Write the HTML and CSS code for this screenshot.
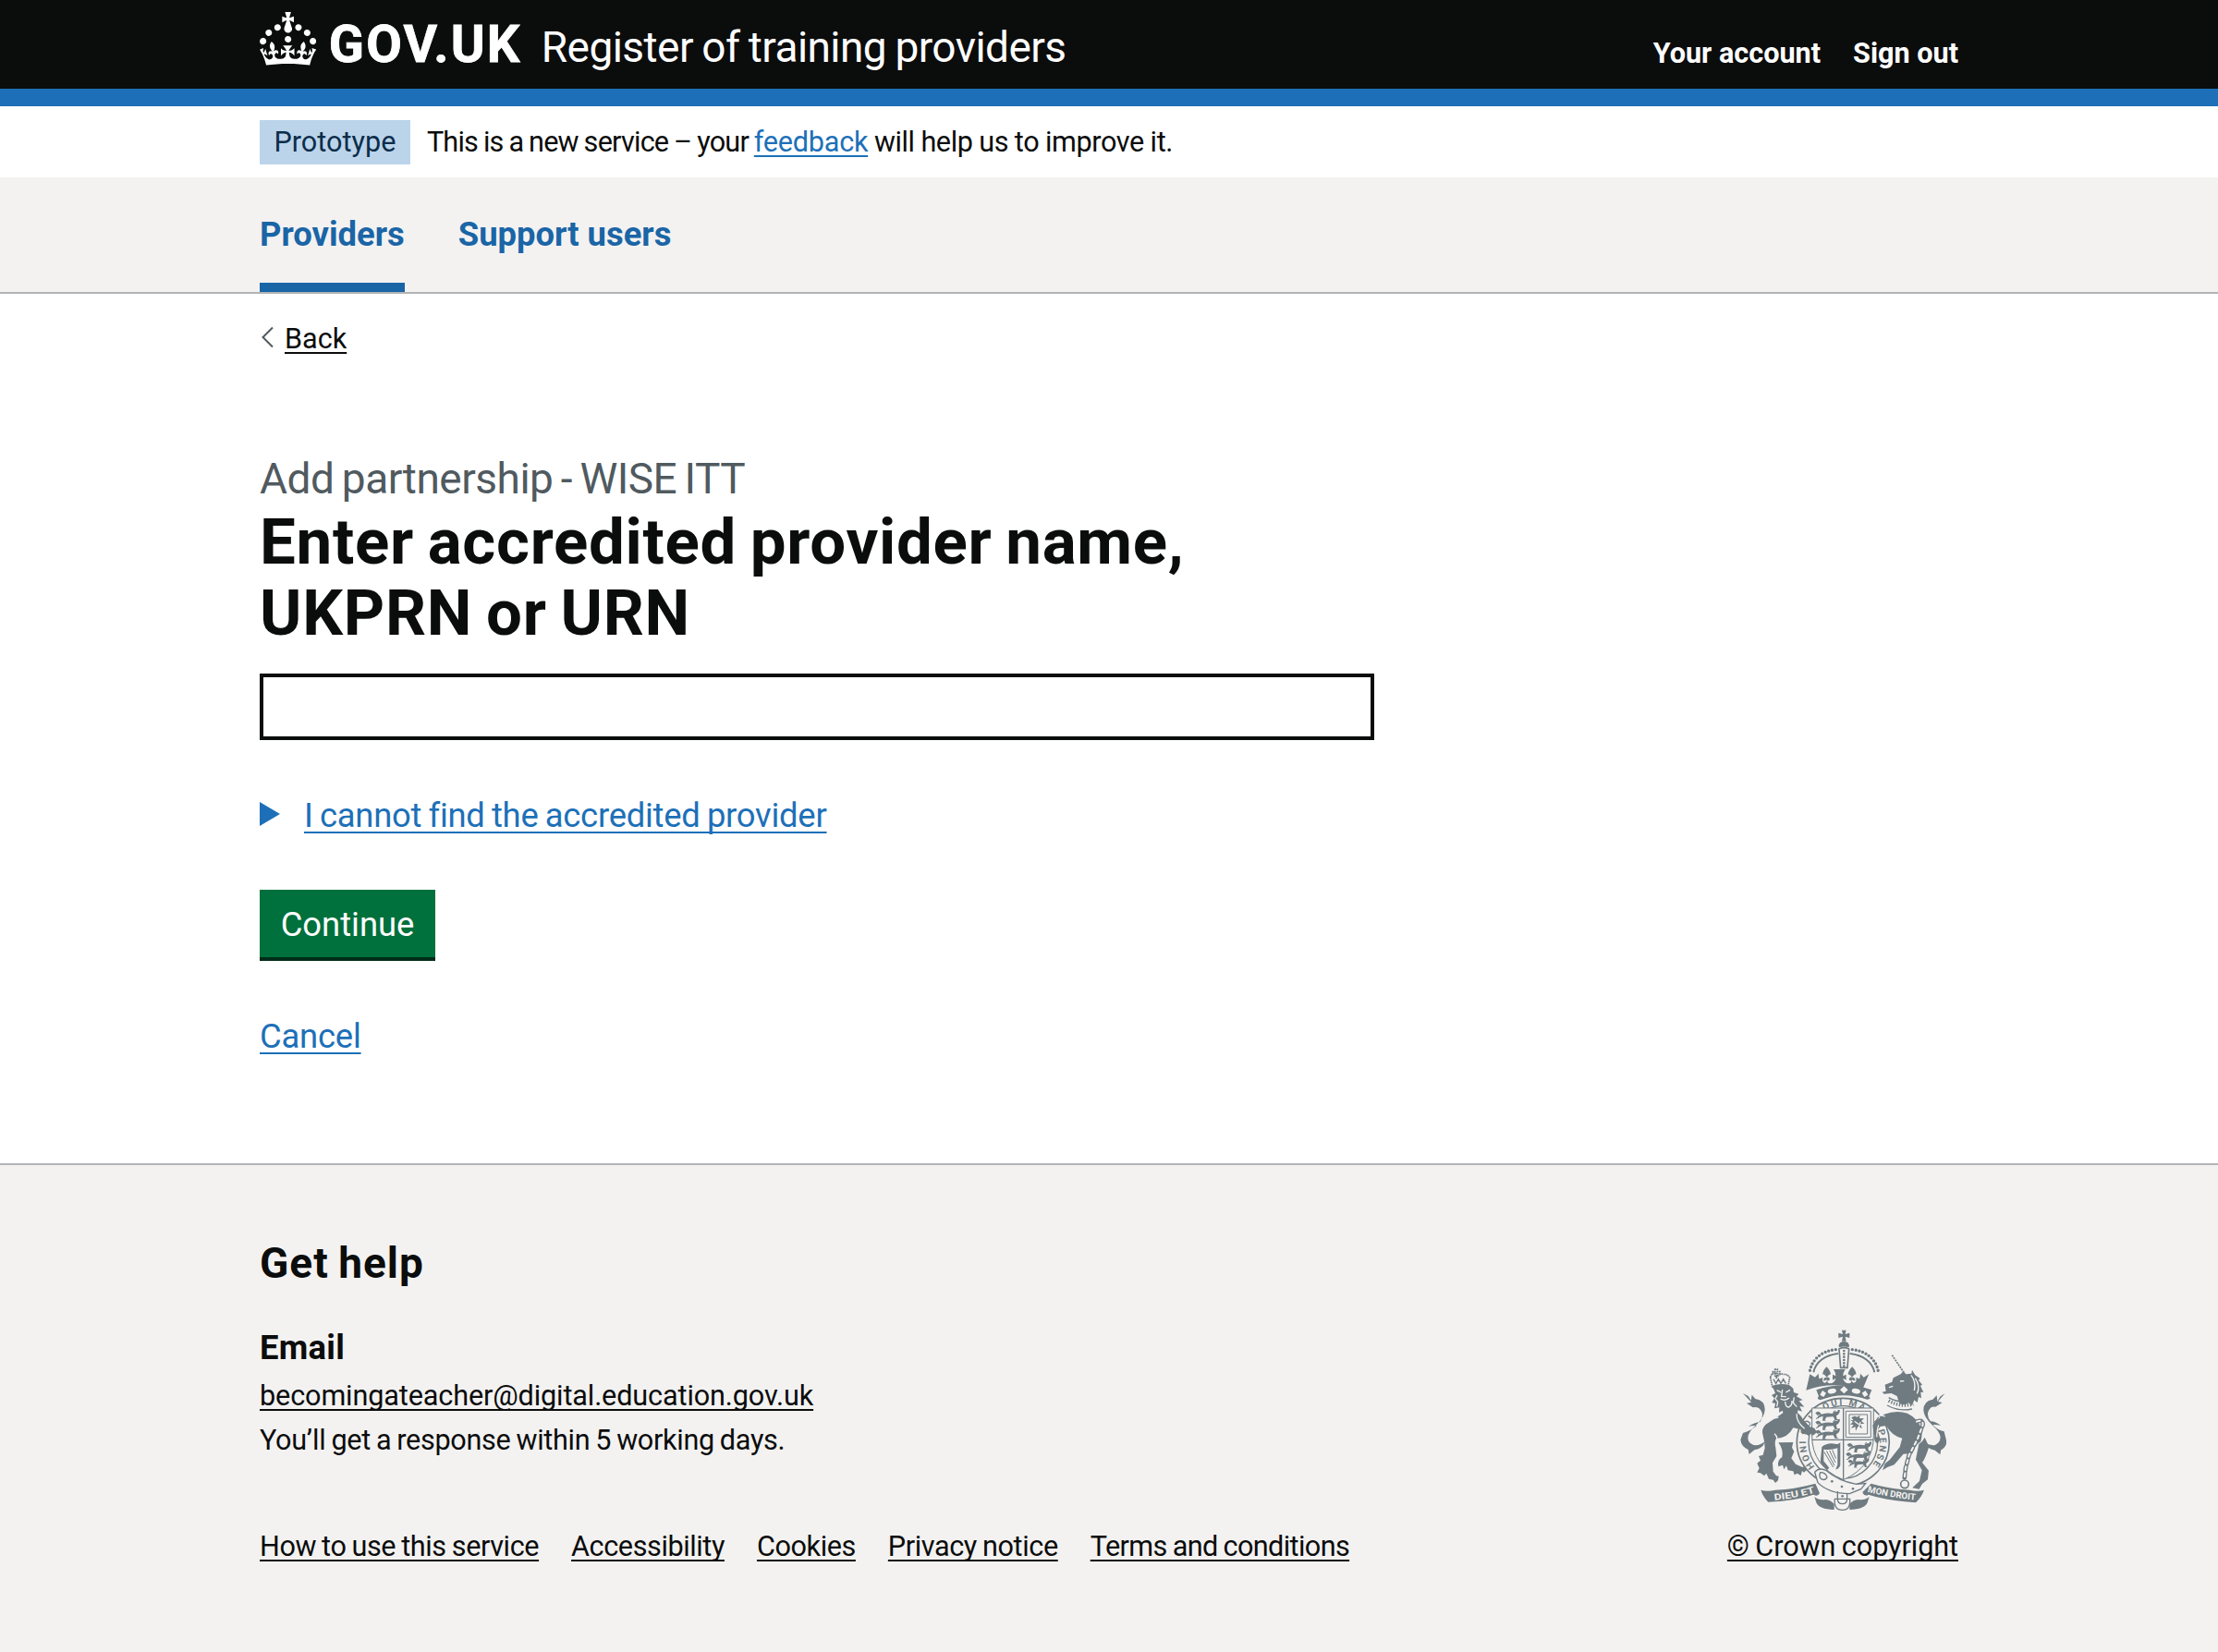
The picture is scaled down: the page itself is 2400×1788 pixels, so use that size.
FILE: index.html
```
<!DOCTYPE html>
<html lang="en">
<head>
<meta charset="utf-8">
<title>Enter accredited provider name, UKPRN or URN</title>
<link rel="stylesheet" href="styles.css">
</head>
<body>
<header class="header">
  <div class="container header-row">
    <a class="logo" href="#">
      <svg class="crown" viewBox="0 0 32 30" aria-hidden="true"><path fill="#fff" d="M22.6 10.4c-1 .4-2-.1-2.4-1-.4-.9.1-2 1-2.4.9-.4 2 .1 2.4 1s-.1 2-1 2.4m-5.9 6.7c-.9.4-2-.1-2.4-1-.4-.9.1-2 1-2.4.9-.4 2 .1 2.4 1s-.1 2-1 2.4m10.8-3.7c-1 .4-2-.1-2.4-1-.4-.9.1-2 1-2.4.9-.4 2 .1 2.4 1s0 2-1 2.4m3.3 4.8c-1 .4-2-.1-2.4-1-.4-.9.1-2 1-2.4.9-.4 2 .1 2.4 1s-.1 2-1 2.4M17 4.7l2.3 1.2V2.5l-2.3.7-.2-.2.9-3h-3.4l.9 3-.2.2c-.1.1-2.3-.7-2.3-.7v3.4L15 4.7c.1.1.1.2.2.2l-1.3 4c-.1.2-.1.4-.1.6 0 1.1.8 2 1.9 2.2h.7c1-.2 1.9-1.1 1.9-2.1 0-.2 0-.4-.1-.6l-1.3-4c-.1-.2 0-.2.1-.3m-7.6 5.7c.9.4 2-.1 2.4-1 .4-.9-.1-2-1-2.4-.9-.4-2 .1-2.4 1s0 2 1 2.4m-5 3c.9.4 2-.1 2.4-1 .4-.9-.1-2-1-2.4-.9-.4-2 .1-2.4 1s.1 2 1 2.4m-3.2 4.8c.9.4 2-.1 2.4-1 .4-.9-.1-2-1-2.4-.9-.4-2 .1-2.4 1s0 2 1 2.4m14.8 11c4.400 0 8.600.3 12.300.8 1.100-4.500 2.400-7 3.700-8.800l-2.500-.9c.2 1.300.3 1.900 0 2.700-.4-.4-.8-1.100-1.100-2.300l-1.200 4c.7-.5 1.300-.8 2-.9-1.100 2.500-2.600 3.100-3.500 3-1.100-.2-1.700-1.200-1.500-2.100.3-1.200 1.500-1.500 2.100-.1 1.100-2.300-.8-3-2-2.300 1.900-1.900 2.100-3.500.6-5.600-2.100 1.600-2.100 3.200-1.200 5.500-1.200-1.400-3.200-.6-2.500 1.600.9-1.400 2.100-.5 1.900.8-.2 1.100-1.700 2.100-3.500 1.900-2.700-.2-2.900-2.100-2.900-3.600.7-.1 1.900.5 2.900 1.900v-4.300c-1.100 1.100-2.100 1.400-3.200 1.400.4-1.200 2.100-3 2.100-3h-5.400s1.700 1.900 2.100 3c-1.100 0-2.100-.2-3.200-1.400v4.300c1-1.400 2.200-2 2.900-1.900-.1 1.500-.2 3.400-2.900 3.600-1.900.2-3.400-.8-3.500-1.900-.2-1.300 1-2.200 1.900-.8.7-2.300-1.200-3-2.500-1.600.9-2.200.9-3.900-1.200-5.500-1.500 2-1.300 3.700.6 5.600-1.200-.7-3.100 0-2 2.300.6-1.400 1.800-1.100 2.100.1.200.9-.3 1.900-1.500 2.100-.9.2-2.400-.5-3.500-3 .6 0 1.200.3 2 .9l-1.200-4c-.3 1.100-.7 1.900-1.100 2.300-.3-.8-.2-1.400 0-2.700L0 21.200C1.300 23 2.600 25.500 3.700 30c3.700-.5 7.900-.8 12.300-.8"/></svg>
      <span class="logotype">GOV.UK</span>
      <span class="product">Register of training providers</span>
    </a>
    <nav class="account">
      <a href="#">Your account</a>
      <a href="#">Sign out</a>
    </nav>
  </div>
</header>
<div class="container phase">
  <strong class="tag">Prototype</strong>
  <p class="phase-text">This is a new service – your <a class="link" href="#">feedback</a><span class="phase-end"> will help us to improve it.</span></p>
</div>
<nav class="service-nav">
  <div class="container nav-row">
    <a class="nav-item nav-active" href="#">Providers</a>
    <a class="nav-item" href="#">Support users</a>
  </div>
</nav>
<div class="container main">
  <a class="back" href="#">
    <svg class="chevron" viewBox="0 0 14 24" aria-hidden="true"><path d="M13 1.5 2.500 12 13 22.500" fill="none" stroke="#505a5f" stroke-width="2"/></svg>
    <span class="back-text">Back</span>
  </a>
  <main>
    <span class="caption">Add partnership - WISE ITT</span>
    <h1 class="title"><label for="provider">Enter accredited provider name,<br>UKPRN or URN</label></h1>
    <input class="input" id="provider" type="text">
    <div class="details">
      <svg class="triangle" viewBox="0 0 22 26" aria-hidden="true"><path d="M0 0 22 13 0 26z" fill="#1d70b8"/></svg>
      <span class="link details-text">I cannot find the accredited provider</span>
    </div>
    <button class="button" type="button">Continue</button>
    <p class="cancel"><a class="link" href="#">Cancel</a></p>
  </main>
</div>
<footer class="footer">
  <div class="container footer-row">
    <div class="footer-main">
      <h2 class="footer-title">Get help</h2>
      <h3 class="footer-subtitle">Email</h3>
      <p class="footer-text"><a class="email" href="#">becomingateacher@digital.education.gov.uk</a></p>
      <p class="footer-text footer-note">You’ll get a response within 5 working days.</p>
      <div class="footer-links">
        <a class="fl fl-first" href="#">How to use this service</a>
        <a class="fl fl-tight" href="#">Accessibility</a>
        <a class="fl fl-tight" href="#">Cookies</a>
        <a class="fl fl-mid" href="#">Privacy notice</a>
        <a class="fl fl-last" href="#">Terms and conditions</a>
      </div>
    </div>
    <div class="copyright">
      <svg class="crest" viewBox="70 55 670 592" aria-hidden="true">
        <defs>
          <path id="motto" d="M312 500A120 121 0 1 1 492 503"/>
          <path id="dieu" d="M181 609Q255 603 318 582"/>
          <path id="droit" d="M483 582Q560 602 642 609"/>
          <g id="passant">
            <path d="M314 326q8-9 15-2l5 6q20-6 36-2 8-10 16-6-2-8 8-5-1 13-12 18l2 11 8 3h-14l-6-11-22 1-5 9 4 3h-12l2-15-12 4-6 5 1-9 9-5-11 2z"/>
            <path d="M374 330q-5-9 4-12M316 345l9-6" fill="none" stroke="#6f7b80" stroke-width="3"/>
          </g>
        </defs>
        <g fill="#6f7b80">
          <!-- crown -->
          <path d="M400 57h14l-3 13 14-4v16l-14-4 3 15h-14l3-15-14 4V66l14 4z"/>
          <path d="M394 98q13-8 26 0 6 8 3 15-16-5-32 0-3-8 3-15z"/>
          <path d="M380 120C335 124 303 152 296 190M434 120C479 124 511 152 518 190" fill="none" stroke="#6f7b80" stroke-width="10" stroke-linecap="round" stroke-dasharray="0 11.500"/>
          <path d="M388 133C345 138 315 160 308 194M426 133C469 138 499 160 506 194" fill="none" stroke="#6f7b80" stroke-width="6"/>
          <path d="M391 118q16-8 32 0l-5 61h-22z" fill="none" stroke="#6f7b80" stroke-width="5"/>
          <path d="M407 124v56" fill="none" stroke="#6f7b80" stroke-width="8" stroke-linecap="round" stroke-dasharray="0 10"/>
          <path d="M296 200l17 10 11-12 2 17 12-4q-4 16 8 17 8-4 5-10-8 5-11 1 5-14 12-5-6-14-15-14 3-15 13-24 12 10 14 24-8 1-14 12 8-6 11 5-3 6-8 3-1 9 8 10 16-1 19-17l-10 6v-18l10 5q1-10-7-22h38q-8 12-7 22l10-5v18l-10-6q3 16 19 17 9-1 8-10-5 3-8-3 3-11 11-5-6-11-14-12 2-14 14-24 10 9 13 24-9 0-15 14 7-9 12 5-3 4-11-1-3 6 5 10 12-1 8-17l12 4 2-17 11 12 17-10-22 52q-90-32-182 0z"/>
          <path d="M317 251q90-30 180 0l-9 22q10 7-6 9-80-28-152 2-14-4-5-12z"/>
          <g fill="#f3f2f1">
            <path d="M407 239l13 12-13 12-13-12zM337 253l12 8-8 13-12-7zM477 253l-12 8 8 13 12-7z"/>
            <ellipse cx="368" cy="255" rx="14" ry="8" transform="rotate(-10 368 255)"/>
            <ellipse cx="446" cy="255" rx="14" ry="8" transform="rotate(10 446 255)"/>
          </g>
          <!-- garter and motto -->
          <ellipse cx="404" cy="421" rx="150" ry="143" fill="#f3f2f1" stroke="#6f7b80" stroke-width="5"/>
          <ellipse cx="404" cy="421" rx="112" ry="118" fill="none" stroke="#6f7b80" stroke-width="4"/>
          <text class="motto"><textPath href="#motto" textLength="540">HONI SOIT QUI MAL Y PENSE</textPath></text>
          <!-- shield -->
          <path d="M303 310h200v90q0 100-98 143-102-43-102-143z" fill="#f3f2f1" stroke="#6f7b80" stroke-width="3"/>
          <path d="M405 310v232M303 413h200" fill="none" stroke="#6f7b80" stroke-width="4"/>
          <use href="#passant"/><use href="#passant" y="30"/><use href="#passant" y="60"/>
          <use href="#passant" x="103" y="103"/><use href="#passant" x="99" y="133"/><use href="#passant" transform="translate(150 202) scale(.86)"/>
          <path d="M413 320h81v85h-81zM424 331h59v63h-59z" fill="none" stroke="#6f7b80" stroke-width="3"/>
          <path d="M431 341q10-8 18-2l10-6-2 10 15 1-9 8 10 8-13 2 6 14-14-6-7 15-1-14-14 5 8-12-11-1 9-8-8-7 10 2z"/>
          <path d="M441 353l14 10M460 355l-5 20" stroke="#f3f2f1" stroke-width="4"/>
          <path d="M335 436q20-16 46-9 9 2 14-6v75q-7 14-15 13l6-15V440q-20 7-45 4v38l18 22-7 7-22-24z"/>
          <path d="M342 452l30 50M350 449l26 48M360 448l19 39M369 446l12 28" fill="none" stroke="#6f7b80" stroke-width="3"/>
          <!-- lion -->
          <path d="M183 184h8v8h8v7h-8v9h-8v-9h-7v-7h7zM168 211q4-17 18-17 6 10 0 20 10-17 25-14 16 1 20 12l-6 28-50 4z" fill="none" stroke="#6f7b80" stroke-width="5" stroke-dasharray="5 2"/>
          <path d="M178 216l8 14 8-14 8 14 8-14 8 14" fill="none" stroke="#6f7b80" stroke-width="4"/>
          <path d="M174 237q30-10 56-1l12 10 2 13 16 5-7 8 20 12-12 3 17 19-15-2 8 17-14-4-1 13-16-9-3 18-12-15-15 16-2-22-12 6 1-16-16 3 3-16-11-3 8-14-9-10 12-6z"/>
          <path d="M189 252l14 7m29-8l-14 8M207 250l-3 22 15 1M201 280q14 9 28-3M216 289q1 19 12 18 11-6 10-21M190 268l-6 12 8 10-3 15M245 275l-3 18 12 13" fill="none" stroke="#f3f2f1" stroke-width="4"/>
          <path d="M198 333q22-17 48-12 19 6 28 26l22 24 15 4 8 14-13 10-8-6-5 8-11-8-10 2-6-16-24-5q-17 33-55 35-7 12-2 29l3 28-13 22 2 28 10 14 8 1-2 14-9 8-7-10-14-3-8-18-7 8-12-9-11-2 7-14-7-16 11-9-6-14 14-4 6-23q-1-23-6-40-8-20 9-36z"/>
          <path d="M194 422l48-1-4 17 7 13-9 22 14 19 22 10 9-4 5 13-9 8-6-5-4 15-12-7-9 5-4-12-17-3-5-15-8 12-4-14-14 5q-5-21 12-31 5-24-12-47z"/>
          <path d="M79 262l17 9 9 14 3-18 11 13q32 5 31 36-1 22-27 48-28 24-28 42 0 17 18 24 22 3 37-12-6 25-34 28l-17 14-3-15q-23-10-25-32l8-22q21-5 45-24-17-1-28 3 20-14 39-15 9-15 6-30-8-22-30-17l-20-14 15-3z"/>
          <path d="M181 393q14 12 5 28M253 329q0 28 26 48M170 345l24-5" fill="none" stroke="#f3f2f1" stroke-width="4"/>
          <!-- unicorn -->
          <path d="M563 138l38 56" fill="none" stroke="#6f7b80" stroke-width="5" stroke-dasharray="6 3"/>
          <path d="M540 234l23-9 4-13 24-12 9-10 8 10 18-2 2-12 10 17 16 11-5 5 12 15-6 4 10 21-9-1 2 20-9-4-4 18-10-8-7 17-12-8q-12 11-29 2l-8-24-18-9-24 2-6-6 12-3z"/>
          <path d="M589 223l13-1M553 243l13-4M625 203q17 22 10 50M638 213q18 27 6 50" fill="none" stroke="#f3f2f1" stroke-width="4"/>
          <path d="M552 276q35 20 82 10M547 301q37 21 81 12" fill="none" stroke="#6f7b80" stroke-width="4"/>
          <path d="M552 286q38 22 80 11" fill="none" stroke="#6f7b80" stroke-width="11" stroke-dasharray="4 5"/>
          <path d="M537 330q40-14 76-3 32 16 44 47 6 23-1 45-22 14-27 38l-29 2-30 35-22 8-16 10 8-22 16-13 32-40 8-29q-33-7-52-41l-19 3-9 13 9 29-10 14q-13-10-9-24l-6-36 10-13z"/>
          <path d="M650 427q13-8 19-22l14 30q-11 37-22 52l21 26-3 29-18 14-10 17-22-4 23-22 8-35-20-35z"/>
          <path d="M735 262l-15 10-10 16-2-19-13 13q-30 5-30 34 1 22 27 48 28 24 28 42-2 17-17 24-20 3-35-11 8 24 34 28l17 14 3-15q21-12 17-32l-7-28q-22-5-37-22 15-1 27 3-18-14-34-14-12-15-8-30 7-20 24-17l22-14-14-3z"/>
          <path d="M643 354q21-8 20 10l-18 48-27 51-11 42-4 35" fill="none" stroke="#6f7b80" stroke-width="14" stroke-linecap="round" stroke-dasharray="15 7"/>
          <path d="M643 354q21-8 20 10l-18 48-27 51-11 42-4 35" fill="none" stroke="#f3f2f1" stroke-width="6" stroke-linecap="round" stroke-dasharray="11 11"/>
          <circle cx="604" cy="557" r="13" fill="none" stroke="#6f7b80" stroke-width="5"/>
          <path d="M512 340q15-12 28-2M519 365q-7 25-5 39" fill="none" stroke="#f3f2f1" stroke-width="4"/>
          <!-- strap and ribbon -->
          <path d="M137 576q22 6 46 0 67-3 131-21l14 31q-6 13-20 5-57 20-147 24-18-18-24-39zM667 576q-22 6-46 0-67-3-126-21l-28 28q6 16 20 8 57 20 153 26 19-18 27-41z"/>
          <path d="M311 598q15 12 36 9 18 1 28 15v18q-49-1-58-23zM489 598q-15 12-36 9-18 1-28 15v18q49-1 58-23z"/>
          <path d="M312 518q14-17 38-5 38 33 97 44l30-2-15 18-37 15q-68 0-103-36z" fill="#f3f2f1" stroke="#6f7b80" stroke-width="4"/>
          <path d="M330 519q17 0 22 15-5 12-18 7-10-8-4-22z" fill="none" stroke="#6f7b80" stroke-width="4"/>
          <path d="M386 580v25q0 16 16 16 15 0 15-16v-18M377 605q-4 36 25 36 27 0 24-36z" fill="none" stroke="#6f7b80" stroke-width="4"/>
          <g><circle cx="368" cy="548" r="4"/><circle cx="400" cy="565" r="4"/><circle cx="436" cy="572" r="4"/><circle cx="402" cy="596" r="4"/></g>
          <g fill="#f3f2f1">
            <text class="ribbon"><textPath href="#dieu" textLength="134" lengthAdjust="spacingAndGlyphs">DIEU ET</textPath></text>
            <text class="ribbon"><textPath href="#droit" textLength="158" lengthAdjust="spacingAndGlyphs">MON DROIT</textPath></text>
          </g>
        </g>
      </svg>
      <a class="fl fl-copy" href="#">© Crown copyright</a>
    </div>
  </div>
</footer>
</body>
</html>
```
FILE: styles.css
```
* { box-sizing: border-box; }
body {
  margin: 0;
  min-height: 1788px;
  display: flex;
  flex-direction: column;
  font-family: Roboto, "Noto Sans", sans-serif;
  font-size: 30.6px;
  line-height: 48px;
  color: #0b0c0c;
  background: #fff;
}
h1, h2, h3, p { margin: 0; }
a { color: inherit; text-decoration: none; }
.container { width: 1838px; margin: 0 auto; }

.link, .back-text, .email, .fl {
  text-decoration: underline;
  text-decoration-thickness: 2px;
  text-underline-offset: 4px;
  text-decoration-skip-ink: none;
}
.link { color: #1d70b8; }

.header { background: #0b0c0c; border-bottom: 19px solid #1d70b8; color: #fff; }
.header-row { display: flex; justify-content: space-between; height: 96px; }
.logo { display: flex; align-items: baseline; }
.crown { width: 61.3px; height: 57.5px; margin-top: 13px; align-self: flex-start; }
.logotype { font-size: 56px; font-weight: 700; line-height: 96px; letter-spacing: 2.2px; margin-left: 13.5px; width: 230px; -webkit-text-stroke: .8px #fff; }
.product { font-size: 46px; letter-spacing: -.55px; word-spacing: -1.5px; }
.account { display: flex; gap: 35px; font-weight: 700; line-height: 96px; padding-top: 10px; }

.phase { display: flex; height: 77px; padding-top: 15px; gap: 18px; line-height: 47px; }
.tag { height: 48px; padding: 0 15.5px; background: #bbd4ea; color: #0c2d4a; font-weight: 400; }
.phase-text { letter-spacing: -.78px; word-spacing: -1px; }
.phase-text .link { letter-spacing: -.25px; }
.phase-end { letter-spacing: -.38px; word-spacing: -.5px; }

.service-nav { background: #f3f2f1; border-bottom: 2px solid #b1b4b6; }
.nav-row { display: flex; gap: 58px; }
.nav-item { height: 124px; line-height: 124px; font-size: 36.4px; font-weight: 700; color: #1a65a6; }
.nav-active { box-shadow: inset 0 -10px #1a65a6; }

.main { flex: 1; }
.back { display: flex; align-items: center; gap: 12px; margin-top: 28px; line-height: 38px; }
.back-text { padding-top: 2px; margin-bottom: -2px; }
.chevron { width: 14px; height: 24px; margin-left: 1px; }
main { margin-top: 105px; }
.caption { display: block; font-size: 46px; line-height: 58px; letter-spacing: -.5px; word-spacing: -2.5px; color: #505a5f; }
.title { padding-top: 2px; font-size: 69px; line-height: 76.5px; letter-spacing: .7px; word-spacing: -3px; font-weight: 700; }
.input { display: block; width: 1206px; height: 72px; margin: 27px 0 0; border: 4px solid #0b0c0c; border-radius: 0; background: #fff; }
.details { display: flex; align-items: center; gap: 26px; height: 48px; margin-top: 58px; font-size: 36.4px; letter-spacing: -.24px; word-spacing: -1.5px; }
.triangle { width: 22px; height: 26px; margin-top: -4px; }
.button {
  display: block; width: 190px; height: 73px; margin-top: 56px; padding: 2px 0 0;
  border: 0; background: #00703c; box-shadow: 0 4px #002d18;
  color: #fff; font-family: inherit; font-size: 36.4px;
}
.cancel { margin-top: 62px; font-size: 36.4px; letter-spacing: -.2px; }
.cancel .link, .details-text { text-underline-offset: 5px; }

.footer { height: 529px; background: #f3f2f1; border-top: 2px solid #b1b4b6; padding-top: 77px; }
.footer-row { display: flex; justify-content: space-between; }
.footer-title { font-size: 46px; line-height: 58px; letter-spacing: 1px; word-spacing: -2px; }
.footer-subtitle { margin-top: 39px; font-size: 36.4px; letter-spacing: .3px; }
.footer-subtitle + .footer-text { margin-top: 4px; }
.footer-note { letter-spacing: -.3px; word-spacing: -1.3px; }
.email { letter-spacing: -.12px; }
.footer-links { display: flex; gap: 35px; margin-top: 72px; line-height: 38px; }
.fl { line-height: 38px; }
.fl-first { letter-spacing: -.41px; word-spacing: -1.1px; }
.fl-tight { letter-spacing: -.41px; }
.fl-mid { letter-spacing: -.4px; word-spacing: -1px; }
.fl-last { letter-spacing: -.61px; word-spacing: -1px; }
.fl-copy { letter-spacing: -.07px; word-spacing: -1px; }
.copyright { display: flex; flex-direction: column; align-items: flex-end; padding-top: 101px; }
.crest { width: 223.3px; height: 197.3px; margin: 0 13px 19px 0; }
.motto { font-size: 30px; font-weight: 700; }
.ribbon { font-size: 29px; font-weight: 700; }
```
